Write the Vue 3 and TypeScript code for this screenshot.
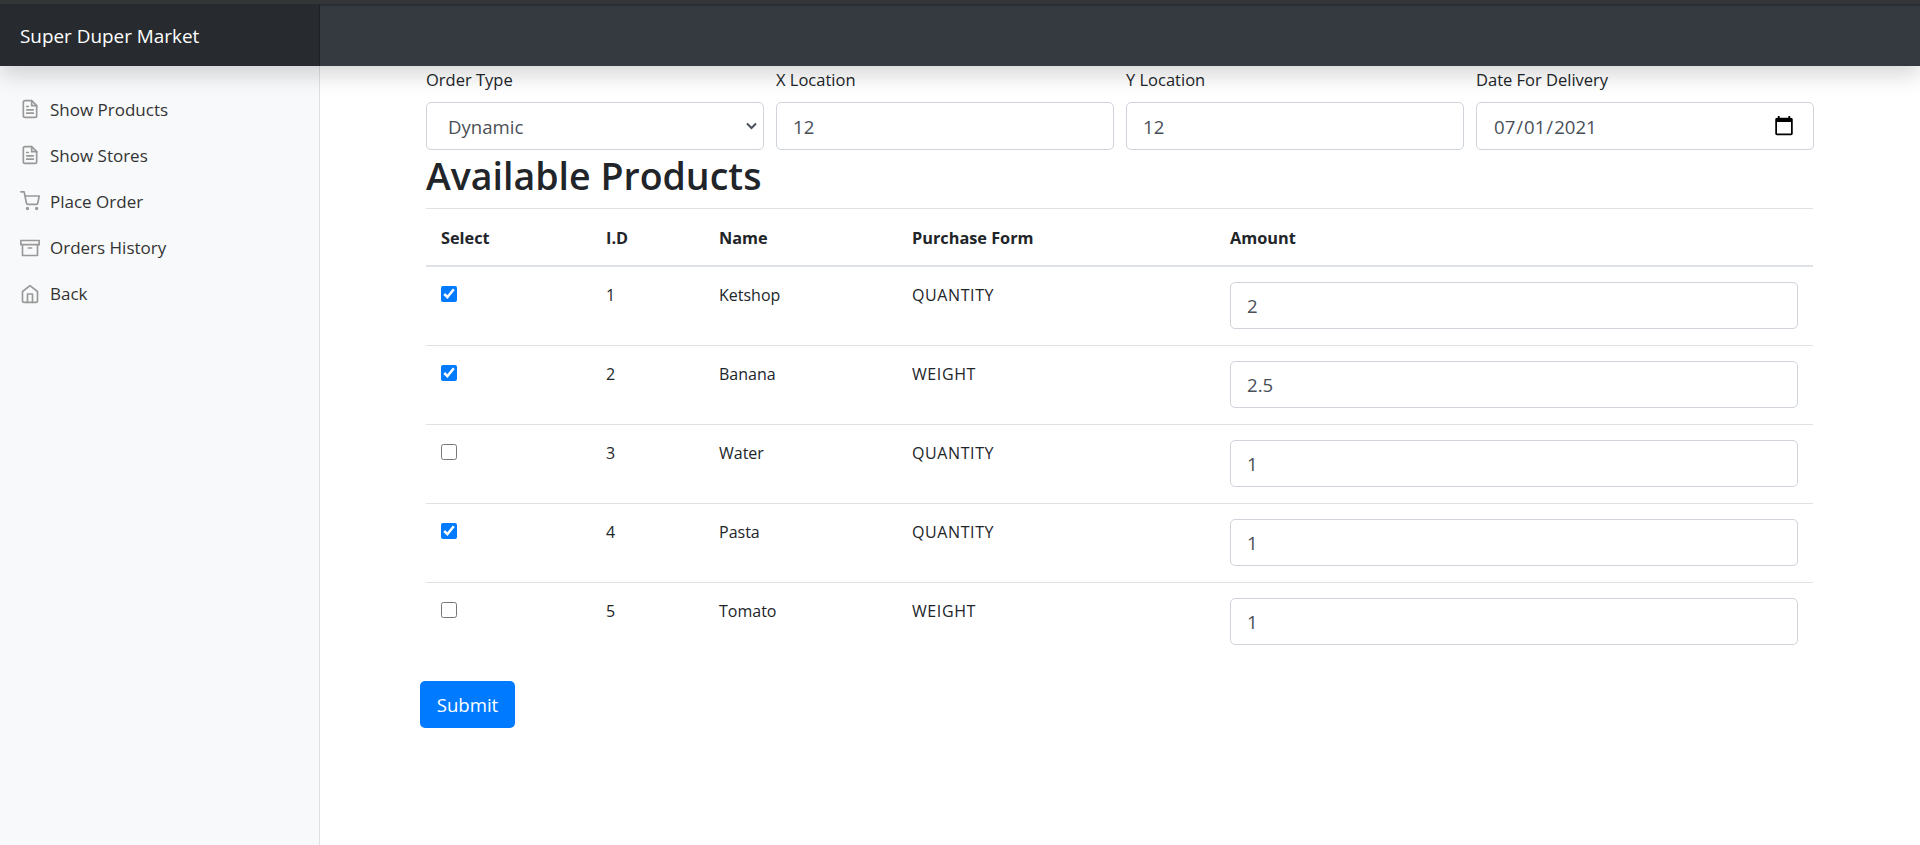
<script setup lang="ts">
import { ref } from "vue"

const navItems = [
  { label: "Show Products", icon: "file" },
  { label: "Show Stores", icon: "file" },
  { label: "Place Order", icon: "cart" },
  { label: "Orders History", icon: "archive" },
  { label: "Back", icon: "home" },
]

const products = ref([
  { id: 1, name: "Ketshop", form: "QUANTITY", amount: "2", selected: true },
  { id: 2, name: "Banana", form: "WEIGHT", amount: "2.5", selected: true },
  { id: 3, name: "Water", form: "QUANTITY", amount: "1", selected: false },
  { id: 4, name: "Pasta", form: "QUANTITY", amount: "1", selected: true },
  { id: 5, name: "Tomato", form: "WEIGHT", amount: "1", selected: false },
])

const orderType = ref("Dynamic")
const xLocation = ref("12")
const yLocation = ref("12")
const deliveryDate = ref("2021-07-01")
</script>

<template>
  <div class="page">
    <header class="navbar">
      <a class="brand">Super Duper Market</a>
    </header>
    <div class="body-row">
      <aside class="sidebar">
        <ul class="nav">
          <li v-for="item in navItems" :key="item.label" class="nav-item">
            <svg class="icon" viewBox="0 0 24 24">
              <template v-if="item.icon === 'file'">
                <path d="M14 2H6a2 2 0 0 0-2 2v16a2 2 0 0 0 2 2h12a2 2 0 0 0 2-2V8z" />
                <path d="M14 2v6h6M16 13H8M16 17H8M10 9H8" />
              </template>
              <template v-else-if="item.icon === 'cart'">
                <circle cx="9" cy="21" r="1" />
                <circle cx="20" cy="21" r="1" />
                <path d="M1 1h4l2.68 13.39a2 2 0 0 0 2 1.61h9.72a2 2 0 0 0 2-1.61L23 6H6" />
              </template>
              <template v-else-if="item.icon === 'archive'">
                <path d="M21 8v13H3V8M1 3h22v5H1zM10 12h4" />
              </template>
              <template v-else>
                <path d="M3 9l9-7 9 7v11a2 2 0 0 1-2 2H5a2 2 0 0 1-2-2z" />
                <path d="M9 22V12h6v10" />
              </template>
            </svg>
            <span>{{ item.label }}</span>
          </li>
        </ul>
      </aside>
      <main class="content">
        <form class="order-form" @submit.prevent>
          <div class="fields">
            <label class="field">
              <span>Order Type</span>
              <select v-model="orderType" class="control">
                <option>Dynamic</option>
                <option>Static</option>
              </select>
            </label>
            <label class="field">
              <span>X Location</span>
              <input v-model="xLocation" class="control" type="text" />
            </label>
            <label class="field">
              <span>Y Location</span>
              <input v-model="yLocation" class="control" type="text" />
            </label>
            <label class="field">
              <span>Date For Delivery</span>
              <input v-model="deliveryDate" class="control" type="date" />
            </label>
          </div>
          <h2>Available Products</h2>
          <table>
            <thead>
              <tr>
                <th class="col-select">Select</th>
                <th class="col-id">I.D</th>
                <th class="col-name">Name</th>
                <th class="col-form">Purchase Form</th>
                <th>Amount</th>
              </tr>
            </thead>
            <tbody>
              <tr v-for="product in products" :key="product.id">
                <td><input v-model="product.selected" class="check" type="checkbox" /></td>
                <td>{{ product.id }}</td>
                <td>{{ product.name }}</td>
                <td class="form-cell">{{ product.form }}</td>
                <td><input v-model="product.amount" class="control" type="text" /></td>
              </tr>
            </tbody>
          </table>
          <button class="submit" type="submit">Submit</button>
        </form>
      </main>
    </div>
  </div>
</template>

<style scoped>
.page {
  background: #fff;
  color: #212529;
  display: flex;
  flex-direction: column;
  font-family: "Open Sans", "Noto Sans", sans-serif;
  height: 845px;
  overflow: hidden;
}

.navbar {
  background: #343a40;
  border-top: 4px solid #333537;
  box-shadow: 0 10px 20px rgba(0, 0, 0, 0.15), inset 0 2px 0 #2b2f35;
  display: flex;
  flex: none;
  height: 62px;
  position: relative;
  z-index: 2;
}

.brand {
  align-items: center;
  background: #272b30;
  box-shadow: inset -1px 0 0 rgba(0, 0, 0, 0.25);
  box-sizing: border-box;
  color: #fff;
  display: flex;
  font-size: 18.9px;
  padding: 2px 0 0 20px;
  width: 320px;
}

.body-row {
  display: flex;
  flex: 1;
  min-height: 0;
}

.sidebar {
  background: #f8f9fa;
  border-right: 1px solid #dee0e3;
  box-sizing: border-box;
  flex: none;
  padding-top: 20px;
  width: 320px;
}

.nav {
  list-style: none;
  margin: 0;
  padding: 0;
}

.nav-item {
  align-items: center;
  color: #333;
  display: flex;
  font-size: 17px;
  font-weight: 500;
  gap: 10px;
  height: 46.2px;
  padding-left: 20px;
}

.icon {
  fill: none;
  flex: none;
  height: 20px;
  stroke: #999;
  stroke-linecap: round;
  stroke-linejoin: round;
  stroke-width: 2;
  width: 20px;
}

.content {
  flex: 1;
  padding: 0 106px;
}

.fields {
  display: grid;
  gap: 12px;
  grid-template-columns: repeat(4, 338px);
}

.field {
  display: flex;
  flex-direction: column;
  font-size: 16.5px;
  gap: 10px;
}

.field span {
  line-height: 24px;
  margin-top: 2px;
}

.control {
  background: #fff;
  border: 1px solid #ced4da;
  border-radius: 5px;
  box-sizing: border-box;
  color: #495057;
  font-family: inherit;
  font-size: 18.6px;
  height: 48px;
  padding: 0 16px;
  width: 100%;
}

select.control {
  appearance: none;
  background: #fff url("data:image/svg+xml,%3Csvg xmlns='http://www.w3.org/2000/svg' viewBox='0 0 11 8'%3E%3Cpath d='M1 1.5l4.5 4.5L10 1.5' fill='none' stroke='%23495057' stroke-width='2'/%3E%3C/svg%3E") no-repeat right 6px center / 11px 8px;
  padding-left: 21px;
}

input[type="date"]::-webkit-calendar-picker-indicator {
  height: 22px;
  margin-right: 0;
  width: 22px;
}

h2 {
  font-size: 37.5px;
  font-weight: 600;
  line-height: 48px;
  margin: 2px 0 8px;
}

table {
  border-collapse: collapse;
  font-size: 16px;
  table-layout: fixed;
  width: 1387px;
}

th {
  border-bottom: 2px solid #dee2e6;
  border-top: 1px solid #dee2e6;
  box-sizing: border-box;
  font-size: 16.3px;
  font-weight: 700;
  height: 57px;
  padding: 2px 15px 0;
  text-align: left;
}

td {
  border-top: 1px solid #dee2e6;
  box-sizing: border-box;
  padding: 17px 15px 16px;
  vertical-align: top;
}

.form-cell {
  letter-spacing: 0.6px;
}

.col-select {
  width: 165px;
}

.col-id {
  width: 113px;
}

.col-name {
  width: 193px;
}

.col-form {
  width: 318px;
}

.check {
  accent-color: #007bff;
  display: block;
  height: 16px;
  margin: 2px 0 0;
  width: 16px;
}

td .control {
  display: block;
  height: 47px;
  margin-top: -2px;
}

.submit {
  background: #007bff;
  border: 0;
  border-radius: 5px;
  color: #fff;
  display: block;
  font-family: inherit;
  font-size: 18.6px;
  height: 47px;
  margin: 20px 0 0 -6px;
  width: 95px;
}
</style>

<style>
body {
  margin: 0;
}
</style>
